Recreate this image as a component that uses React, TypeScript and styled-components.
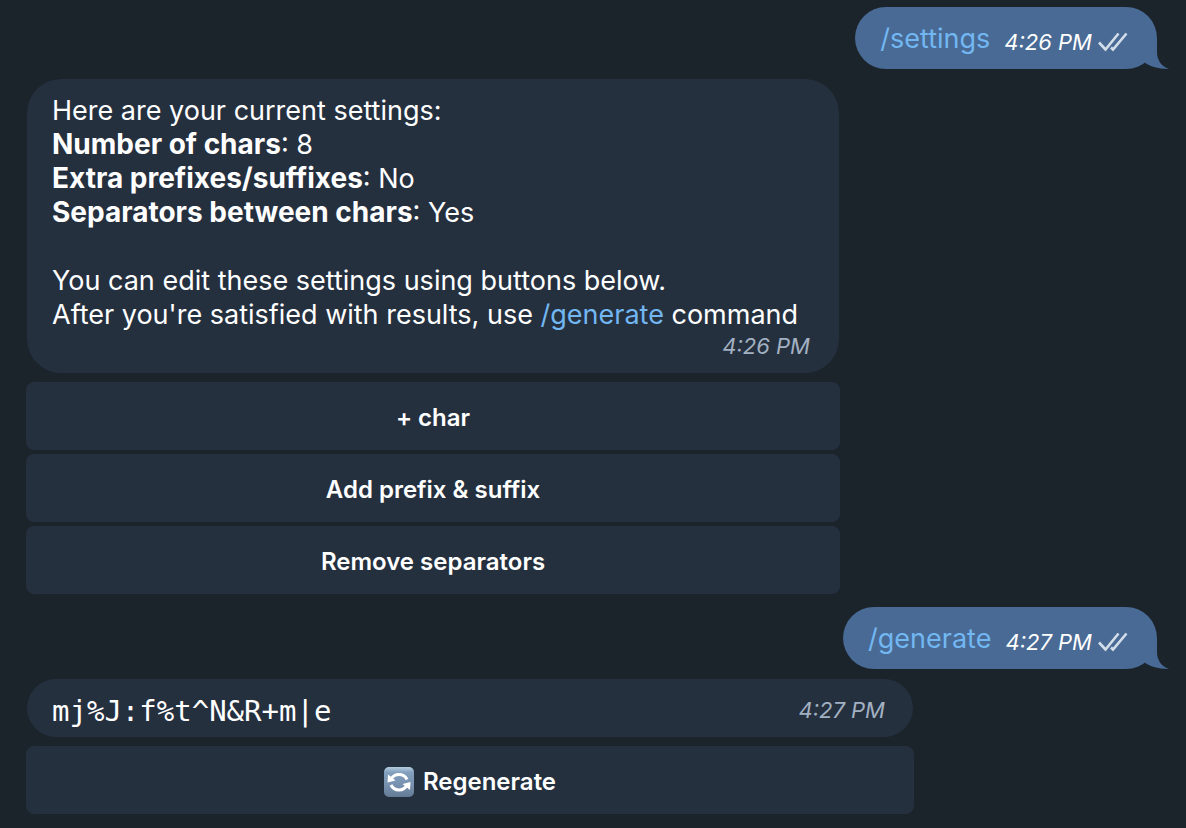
import React from "react";
import styled, { createGlobalStyle } from "styled-components";

const GlobalStyle = createGlobalStyle`
  * { box-sizing: border-box; }
  body {
    margin: 0;
    background: #1b232b;
    color: #ffffff;
    font-family: Inter, "Liberation Sans", sans-serif;
    font-size: 27px;
    line-height: 34px;
  }
`;

const Chat = styled.main`
  display: flex;
  flex-direction: column;
  gap: 10px;
  padding: 7px 29px 14px 26px;
`;

const Outgoing = styled.div`
  position: relative;
  align-self: flex-end;
  display: flex;
  align-items: center;
  gap: 14px;
  height: 62px;
  padding: 2px 29px 0 25px;
  border-radius: 31px;
  background: #486a94;
`;

const Tail = styled.svg`
  position: absolute;
  right: -12px;
  bottom: 0;
`;

const Command = styled.a`
  color: #73b7f2;
  text-decoration: none;
`;

const Time = styled.time<{ $bright?: boolean }>`
  font-size: 22px;
  line-height: 26px;
  font-style: italic;
  color: ${(p) => (p.$bright ? "#ffffff" : "#a3b0c2")};
`;

const Status = styled.span`
  display: flex;
  align-items: center;
  gap: 6px;
  padding-top: 6px;
`;

const Incoming = styled.section<{ $width: number }>`
  width: ${(p) => p.$width}px;
  max-width: 100%;
  display: flex;
  flex-direction: column;
  gap: 9px;
`;

const Card = styled.article<{ $inline?: boolean }>`
  display: flex;
  flex-direction: ${(p) => (p.$inline ? "row" : "column")};
  justify-content: space-between;
  align-items: ${(p) => (p.$inline ? "center" : "stretch")};
  margin: 0 1px;
  padding: ${(p) => (p.$inline ? "13px 28px 9px 25px" : "15px 29px 14px 25px")};
  border-radius: 34px;
  background: #25303f;

  & > ${Time} {
    align-self: ${(p) => (p.$inline ? "center" : "flex-end")};
  }
`;

const Text = styled.p`
  margin: 0 0 1px;
  white-space: pre-wrap;

  b {
    font-size: 28px;
    line-height: 32px;
  }
`;

const Password = styled.code`
  padding-top: 2px;
  font-family: "DejaVu Sans Mono", "Liberation Mono", monospace;
  font-size: 29px;
`;

const Keyboard = styled.div`
  display: flex;
  flex-direction: column;
  gap: 4px;
`;

const Key = styled.button`
  display: flex;
  align-items: center;
  justify-content: center;
  gap: 9px;
  height: 68px;
  padding: 3px 0 0;
  border: 0;
  border-radius: 8px;
  background: #25303f;
  color: #ffffff;
  font: 600 24px/30px Inter, "Liberation Sans", sans-serif;
`;

const Spacer = styled.div`
  height: 3px;
  margin-bottom: -10px;
`;

function Checks() {
  return (
    <svg width="30" height="20" viewBox="0 0 30 20" fill="none" stroke="#d3deea" strokeWidth="2.6" aria-label="Read">
      <path d="M1 10.5 7.5 17.5 20.5 1.5" />
      <path d="M13 15.5 15 17.5 28.5 1.5" />
    </svg>
  );
}

function Sent({ command, time }: { command: string; time: string }) {
  return (
    <Outgoing>
      <Command href="#">{command}</Command>
      <Status>
        <Time $bright>{time}</Time>
        <Checks />
      </Status>
      <Tail width="32" height="31" viewBox="0 0 32 31" fill="#486a94" aria-hidden="true">
        <path d="M20 0V14C20 22 24 28 32 31C20 31 12 28 7 24L0 14Z" />
      </Tail>
    </Outgoing>
  );
}

function RefreshEmoji() {
  return (
    <svg width="30" height="30" viewBox="0 0 30 30" aria-hidden="true">
      <defs>
        <linearGradient id="tile" x1="0" y1="0" x2="0" y2="1">
          <stop offset="0" stopColor="#b5cde0" />
          <stop offset=".18" stopColor="#829fbe" />
          <stop offset=".6" stopColor="#7891b0" />
          <stop offset="1" stopColor="#647b94" />
        </linearGradient>
      </defs>
      <rect width="30" height="30" rx="5" fill="url(#tile)" />
      <g fill="none" stroke="#ffffff" strokeWidth="3">
        <path d="M7 12.5A8.8 8.5 0 0 1 23 12.5" />
        <path d="M23 18A8.8 8.5 0 0 1 7 18" />
      </g>
      <path d="M4 7.5 3.5 15.5 11.5 13.5Z" fill="#ffffff" />
      <path d="M26 23 26.5 15 18.5 17Z" fill="#ffffff" />
    </svg>
  );
}

export default function App() {
  return (
    <>
      <GlobalStyle />
      <Chat>
        <Sent command="/settings" time="4:26 PM" />
        <Incoming $width={814}>
          <Card>
            <Text>
              Here are your current settings:{"\n"}
              <b>Number of chars</b>: 8{"\n"}
              <b>Extra prefixes/suffixes</b>: No{"\n"}
              <b>Separators between chars</b>: Yes{"\n\n"}
              You can edit these settings using buttons below.{"\n"}
              After you're satisfied with results, use <Command href="#">/generate</Command> command
            </Text>
            <Time>4:26 PM</Time>
          </Card>
          <Keyboard>
            <Key>+ char</Key>
            <Key>Add prefix &amp; suffix</Key>
            <Key>Remove separators</Key>
          </Keyboard>
        </Incoming>
        <Spacer />
        <Sent command="/generate" time="4:27 PM" />
        <Incoming $width={888}>
          <Card $inline>
            <Password>mj%J:f%t^N&amp;R+m|e</Password>
            <Time>4:27 PM</Time>
          </Card>
          <Keyboard>
            <Key>
              <RefreshEmoji />
              Regenerate
            </Key>
          </Keyboard>
        </Incoming>
      </Chat>
    </>
  );
}
